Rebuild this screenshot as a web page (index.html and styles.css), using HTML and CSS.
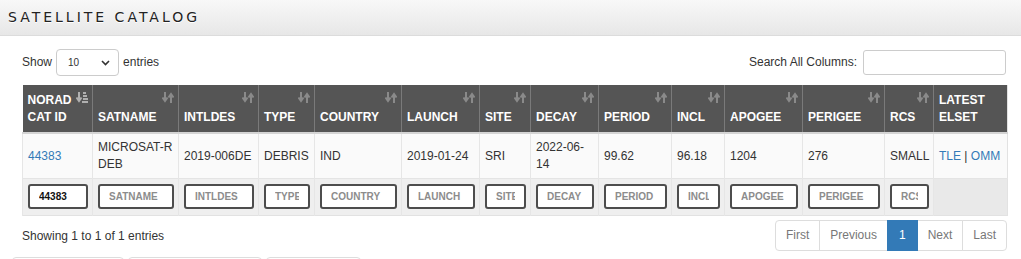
FILE: index.html
```html
<!DOCTYPE html>
<html lang="en">
<head>
    <meta charset="UTF-8">
    <meta name="viewport" content="width=device-width, initial-scale=1.0">
    <title>Satellite Catalog</title>
    <link rel="stylesheet" href="styles.css">
</head>
<body>
    <div class="topbar">
        <h1 class="title">Satellite Catalog</h1>
    </div>
    <div class="content">
        <div class="toolbar">
            <div class="length">
                <span>Show</span>
                <div class="select-wrap">
                    <select class="length-select">
                        <option>10</option>
                        <option>25</option>
                        <option>50</option>
                        <option>100</option>
                    </select>
                    <svg class="chevron" width="9" height="6" viewBox="0 0 9 6"><path d="M1 1l3.5 3.5L8 1" fill="none" stroke="#333" stroke-width="1.6"/></svg>
                </div>
                <span>entries</span>
            </div>
            <div class="search">
                <label for="searchAll">Search All Columns:</label>
                <input type="text" id="searchAll" class="search-input">
            </div>
        </div>

        <table class="catalog">
            <colgroup>
                <col class="c-norad"><col class="c-satname"><col class="c-intldes"><col class="c-type">
                <col class="c-country"><col class="c-launch"><col class="c-site"><col class="c-decay">
                <col class="c-period"><col class="c-incl"><col class="c-apogee"><col class="c-perigee">
                <col class="c-rcs"><col class="c-elset">
            </colgroup>
            <thead>
                <tr id="headRow"></tr>
            </thead>
            <tbody>
                <tr class="data-row">
                    <td><a href="#">44383</a></td>
                    <td>MICROSAT-R DEB</td>
                    <td>2019-006DE</td>
                    <td>DEBRIS</td>
                    <td>IND</td>
                    <td>2019-01-24</td>
                    <td>SRI</td>
                    <td>2022-06-14</td>
                    <td>99.62</td>
                    <td>96.18</td>
                    <td>1204</td>
                    <td>276</td>
                    <td>SMALL</td>
                    <td><a href="#">TLE</a> | <a href="#">OMM</a></td>
                </tr>
                <tr class="filter-row" id="filterRow"></tr>
            </tbody>
        </table>

        <div class="footer">
            <div class="info">Showing 1 to 1 of 1 entries</div>
            <ul class="pager">
                <li class="disabled">First</li>
                <li class="disabled">Previous</li>
                <li class="active">1</li>
                <li class="disabled">Next</li>
                <li class="disabled">Last</li>
            </ul>
        </div>

        <div class="tabs">
            <div class="tab tab-a"></div>
            <div class="tab tab-b"></div>
            <div class="tab tab-c"></div>
        </div>
    </div>

    <script>
        const columns = [
            { key: 'NORAD CAT ID', sorted: true },
            { key: 'SATNAME' },
            { key: 'INTLDES' },
            { key: 'TYPE' },
            { key: 'COUNTRY' },
            { key: 'LAUNCH' },
            { key: 'SITE' },
            { key: 'DECAY' },
            { key: 'PERIOD' },
            { key: 'INCL' },
            { key: 'APOGEE' },
            { key: 'PERIGEE' },
            { key: 'RCS' },
            { key: 'LATEST ELSET', noSort: true }
        ];

        const sortIcon = '<svg class="sort" width="12" height="11" viewBox="0 0 12 11">' +
            '<path d="M3 0v8M0.5 5.5L3 9l2.5-3.5" fill="none" stroke="currentColor" stroke-width="2"/>' +
            '<path d="M9 11V3M6.5 5.5L9 2l2.5 3.5" fill="none" stroke="currentColor" stroke-width="2"/></svg>';

        const sortedIcon = '<svg class="sort sorted" width="12" height="11" viewBox="0 0 12 11">' +
            '<path d="M3 0v8M0.5 5.5L3 9l2.5-3.5" fill="none" stroke="currentColor" stroke-width="2"/>' +
            '<rect x="7" y="0" width="3" height="2" fill="currentColor"/>' +
            '<rect x="7" y="3" width="4" height="2" fill="currentColor"/>' +
            '<rect x="7" y="6" width="5" height="2" fill="currentColor"/>' +
            '<rect x="6" y="9" width="6" height="2" fill="currentColor"/></svg>';

        const headRow = document.getElementById('headRow');
        const filterRow = document.getElementById('filterRow');

        columns.forEach((col, index) => {
            const th = document.createElement('th');
            th.innerHTML = col.key.replace(' ELSET', '<br>ELSET');
            if (!col.noSort) {
                th.classList.add('sortable');
                th.insertAdjacentHTML('beforeend', col.sorted ? sortedIcon : sortIcon);
            }
            headRow.appendChild(th);

            const td = document.createElement('td');
            if (!col.noSort) {
                const input = document.createElement('input');
                input.type = 'text';
                input.className = 'col-filter';
                input.placeholder = col.key === 'NORAD CAT ID' ? 'NORAD' : col.key;
                if (index === 0) input.value = '44383';
                td.appendChild(input);
            } else {
                td.className = 'empty';
            }
            filterRow.appendChild(td);
        });
    </script>
</body>
</html>
```

FILE: styles.css
```css
html {
    overflow: hidden;
}
body {
    margin: 0;
    font-family: "Liberation Sans", Arial, sans-serif;
    font-size: 12px;
    line-height: 17px;
    color: #333;
    background-color: #fff;
}
.topbar {
    height: 36px;
    box-sizing: border-box;
    background: linear-gradient(#f8f8f8, #e7e7e7);
    border-bottom: 1px solid #dcdcdc;
    display: flex;
    align-items: center;
    padding-left: 8px;
}
.title {
    margin: 0;
    font-family: "DejaVu Sans", sans-serif;
    font-weight: normal;
    font-size: 14px;
    letter-spacing: 3px;
    text-transform: uppercase;
    color: #222;
    text-shadow: 0 1px 0 #fff;
}
.content {
    padding: 13px 14px 0 22px;
}
.toolbar {
    display: flex;
    justify-content: space-between;
    align-items: center;
    height: 27px;
    margin-bottom: 9px;
}
.length {
    display: flex;
    align-items: center;
    gap: 4px;
}
.select-wrap {
    position: relative;
}
.length-select {
    appearance: none;
    -webkit-appearance: none;
    width: 63px;
    height: 27px;
    padding: 0 0 0 11px;
    border: 1px solid #ccc;
    border-radius: 4px;
    background: #fff;
    font-family: inherit;
    font-size: 10px;
    color: #333;
}
.chevron {
    position: absolute;
    right: 9px;
    top: 11px;
    pointer-events: none;
}
.search {
    display: flex;
    align-items: center;
    gap: 6px;
}
.search-input {
    width: 143px;
    height: 25px;
    box-sizing: border-box;
    border: 1px solid #ccc;
    border-radius: 3px;
    margin-right: 1px;
}
.catalog {
    width: 985px;
    table-layout: fixed;
    border-collapse: collapse;
    border-right: 1px solid #e2e2e2;
    border-bottom: 1px solid #e2e2e2;
}
.c-norad { width: 70px; }
.c-satname { width: 86px; }
.c-intldes { width: 80px; }
.c-type { width: 56px; }
.c-country { width: 87px; }
.c-launch { width: 78px; }
.c-site { width: 51px; }
.c-decay { width: 68px; }
.c-period { width: 73px; }
.c-incl { width: 53px; }
.c-apogee { width: 78px; }
.c-perigee { width: 82px; }
.c-rcs { width: 49px; }
.c-elset { width: 74px; }
.catalog th {
    position: relative;
    background-color: #555;
    color: #fff;
    font-weight: bold;
    text-align: left;
    vertical-align: bottom;
    padding: 7px 4px 6px 5px;
    border-left: 1px solid #7a7a7a;
    border-bottom: 2px solid #d4d4d4;
}
.catalog th:first-child {
    border-left: none;
}
.catalog th.sortable {
    padding-right: 18px;
}
.sort {
    position: absolute;
    top: 7px;
    right: 4px;
    color: #8a8a8a;
}
.sort.sorted {
    color: #b0b0b0;
}
.catalog td {
    padding: 5px 4px 5px 5px;
    vertical-align: middle;
    border-left: 1px solid #e6e6e6;
}
.data-row td {
    background-color: #fafafa;
}
.catalog a {
    color: #337ab7;
    text-decoration: none;
}
.filter-row td {
    background-color: #efefef;
    padding: 5px 4px 6px 5px;
    border-top: 1px solid #e4e4e4;
}
.filter-row td.empty {
    background-color: #e9e9e9;
}
.col-filter {
    display: block;
    width: 100%;
    height: 25px;
    box-sizing: border-box;
    border: 2px solid #4d4d4d;
    border-radius: 3px;
    padding: 0 9px;
    font-family: inherit;
    font-size: 10px;
    font-weight: bold;
    color: #111;
    background: #fff;
}
.col-filter::placeholder {
    color: #8c8c8c;
}
.footer {
    display: flex;
    justify-content: space-between;
    align-items: center;
    margin-top: 4px;
}
.info {
    padding-top: 1px;
}
.pager {
    display: flex;
    list-style: none;
    margin: 0;
    padding: 0;
}
.pager li {
    padding: 6px 10px;
    border: 1px solid #ddd;
    margin-left: -1px;
    color: #777;
    background: #fff;
}
.pager li:first-child {
    border-radius: 4px 0 0 4px;
}
.pager li:last-child {
    border-radius: 0 4px 4px 0;
}
.pager li.active {
    background-color: #337ab7;
    border-color: #337ab7;
    color: #fff;
    padding: 6px 11px;
    position: relative;
}
.tabs {
    display: flex;
    gap: 4px;
    margin: 6px 0 0 -10px;
}
.tab {
    height: 20px;
    border: 1px solid #ddd;
    border-radius: 4px 4px 0 0;
}
.tab-a { width: 110px; }
.tab-b { width: 132px; }
.tab-c { width: 93px; }
```
